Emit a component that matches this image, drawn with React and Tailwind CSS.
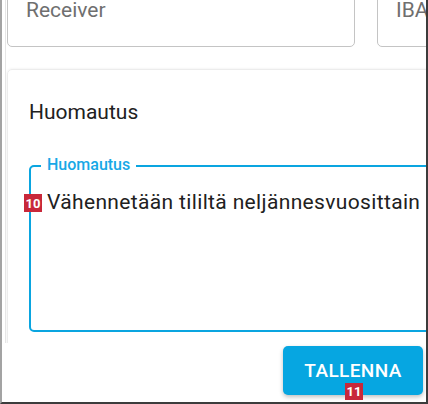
const Badge = ({ n, className }) => (
  <span
    className={`absolute flex items-center justify-center bg-[#c8283a] text-white text-[13px] font-bold leading-none ${className}`}
  >
    {n}
  </span>
);

const App = () => {
  return (
    <div
      className="relative w-[428px] h-[404px] overflow-hidden bg-white border-l-2 border-l-[#a3a3a3] border-r-2 border-r-[#3c3c3c] border-b-2 border-b-[#3c3c3c]"
      style={{ fontFamily: 'Roboto, "Liberation Sans", sans-serif' }}
    >
      <div className="ml-[3px] h-[343px] overflow-hidden border-l border-[#e6e6e6] pl-[1px]">
        {/* fields row, scrolled partly out of view */}
        <div className="-mt-[10px] flex gap-[22px] w-[600px]">
          <div className="w-[348px] h-[57px] shrink-0 rounded-[5px] border border-[#c4c4c4] pl-[18px] pt-[7px] text-[21px] leading-[24px] text-[#6f6f6f]">
            Receiver
          </div>
          <div className="w-[200px] h-[57px] shrink-0 rounded-[5px] border border-[#c4c4c4] pl-[18px] pt-[7px] text-[21px] leading-[24px] text-[#6f6f6f]">
            IBAN
          </div>
        </div>

        {/* note card */}
        <div className="mt-[22px] w-[600px] h-[320px] rounded-tl-[5px] border border-[#ececec] shadow-[0_0_3px_rgba(0,0,0,0.08)] pl-[21px] pt-[30px]">
          <h2 className="text-[21px] leading-[24px] text-[#212121]">Huomautus</h2>
          <div className="relative mt-[41px] w-[500px] h-[167px] rounded-[5px] border-2 border-[#0aa5e0] pl-[16px] pt-[23px]">
            <span className="absolute -top-[11px] left-[10px] bg-white px-[6px] text-[16px] leading-[18px] font-medium text-[#17a8e6]">
              Huomautus
            </span>
            <p className="text-[21px] leading-[24px] tracking-[0.35px] text-[#212121]">
              Vähennetään tililtä neljännesvuosittain
            </p>
          </div>
        </div>
      </div>

      <div className="flex justify-end pr-[3px] pt-[3px]">
        <button className="w-[140px] h-[49px] rounded-[5px] bg-[#06a6e1] text-white text-[19px] leading-[24px] font-medium tracking-[0.02em] shadow-[0_2px_4px_rgba(0,0,0,0.25)]">
          TALLENNA
        </button>
      </div>

      <Badge n="10" className="left-[22px] top-[194px] w-[18px] h-[18px]" />
      <Badge n="11" className="left-[343px] top-[383px] w-[18px] h-[17px]" />
    </div>
  );
};

export default App;
